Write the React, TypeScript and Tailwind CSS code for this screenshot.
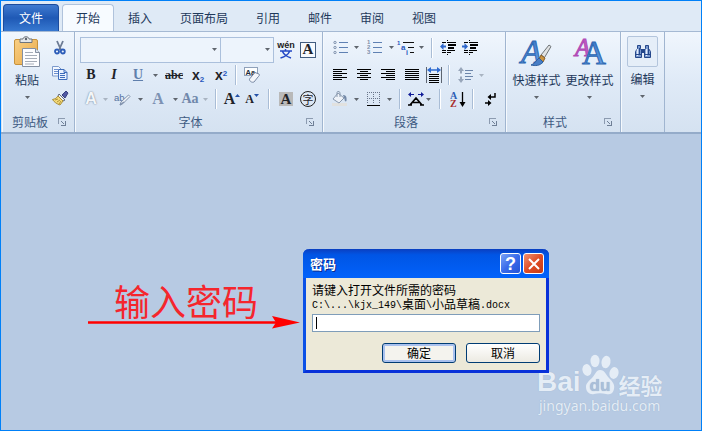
import type { ReactNode } from "react";

const SERIF = "font-['Liberation_Serif',serif] font-bold";

function Caret({ dim = false }: { dim?: boolean }) {
  return (
    <svg width="5" height="3" viewBox="0 0 5 3" className="shrink-0" aria-hidden="true">
      <path d="M0 0h5L2.500 3z" fill={dim ? "#a9b4c2" : "#5f656d"} />
    </svg>
  );
}

function Tool({ label, w = "w-6", children }: { label: string; w?: string; children: ReactNode }) {
  return (
    <button type="button" aria-label={label} className={`flex h-6 shrink-0 items-center justify-center leading-none text-[#1f2329] ${w}`}>
      {children}
    </button>
  );
}

function Drop({ label, w = "w-1.5", dim }: { label: string; w?: string; dim?: boolean }) {
  return (
    <Tool label={label} w={w}>
      <Caret dim={dim} />
    </Tool>
  );
}

function Sep({ w = "w-4" }: { w?: string }) {
  return (
    <span className={`flex shrink-0 justify-center ${w}`}>
      <span className="h-5 w-0.5 border-l border-r border-l-[#a9bdd6] border-r-white" />
    </span>
  );
}

function Group({ title, width, launcher = true, children }: { title: string; width: string; launcher?: boolean; children: ReactNode }) {
  return (
    <section aria-label={title || "编辑"} className={`flex shrink-0 flex-col border-r border-[#a0b5d0] shadow-[inset_1px_0_0_#f5f9fd] ${width}`}>
      <div className="flex h-20 pt-1">{children}</div>
      <div className="flex h-5 items-center text-[#3e5a82]">
        {title && <span className="flex-1 text-center">{title}</span>}
        {launcher && (
          <button type="button" aria-label={`${title}设置`} className="flex w-4 items-center">
            <svg width="8" height="8" viewBox="0 0 8 8" shapeRendering="crispEdges" aria-hidden="true">
              <path d="M0 6V0h7v1H1v5z" fill="#8c9bb0" />
              <path d="M3 3h1v1H3zM4 4h1v1H4zM5 5h1v1H5zM7 3h1v5H3V7h4z" fill="#6f7f96" />
            </svg>
          </button>
        )}
      </div>
    </section>
  );
}

function Combo({ label, w }: { label: string; w: string }) {
  return (
    <label className={`grid h-[26px] shrink-0 items-center ${w}`}>
      <select aria-label={label} className="col-start-1 row-start-1 h-full w-full appearance-none border border-[#abc0dc] bg-[#edf4fc]">
        <option></option>
      </select>
      <span className="pointer-events-none col-start-1 row-start-1 justify-self-end pr-1">
        <Caret />
      </span>
    </label>
  );
}

function Lines({ rows }: { rows: [number, number][] }) {
  return (
    <svg width="14" height="12" viewBox="0 0 14 12" shapeRendering="crispEdges" aria-hidden="true">
      {rows.map(([x, w], i) => (
        <rect key={i} x={x} y={i * 2} width={w} height="1" fill="#000" />
      ))}
    </svg>
  );
}

const LEFT: [number, number][] = [[0, 14], [0, 9], [0, 14], [0, 9], [0, 14], [0, 9]];
const CENTER: [number, number][] = [[0, 14], [3, 8], [0, 14], [3, 8], [0, 14], [3, 8]];
const RIGHT: [number, number][] = [[0, 14], [5, 9], [0, 14], [5, 9], [0, 14], [5, 9]];
const FULL: [number, number][] = [[0, 14], [0, 14], [0, 14], [0, 14], [0, 14], [0, 14]];

function PasteIcon() {
  return (
    <svg width="28" height="32" viewBox="0 0 28 32" aria-hidden="true">
      <defs>
        <linearGradient id="board" x2="1" y2="1">
          <stop stopColor="#f9cf84" />
          <stop offset="1" stopColor="#e9aa49" />
        </linearGradient>
      </defs>
      <rect x="1.500" y="3.500" width="23" height="25" rx="1.500" fill="url(#board)" stroke="#c7923c" />
      <path d="M7 3h3c0-3 6-3 6 0h3v3.500H7z" fill="#e4e7ea" stroke="#6d747d" />
      <circle cx="13" cy="3" r="1.200" fill="#59616b" />
      <path d="M9.500 12.500h13l4 4v14h-17z" fill="#fdfdff" stroke="#8590a2" />
      <path d="M22.500 12.500v4h4" fill="#dfe5ee" stroke="#8590a2" />
      <path d="M12 16.500h8M12 19.500h12M12 22.500h12M12 25.500h12M12 28h9" stroke="#a6adb8" />
    </svg>
  );
}

function ScissorsIcon() {
  return (
    <svg width="12" height="16" viewBox="0 0 12 16" aria-hidden="true">
      <path d="M3 1l4 9M9 1L5 10" stroke="#6c7b94" strokeWidth="1.800" />
      <circle cx="3" cy="11.500" r="2" fill="none" stroke="#2c5cb8" strokeWidth="1.800" />
      <circle cx="8.800" cy="11.500" r="2" fill="none" stroke="#2c5cb8" strokeWidth="1.800" />
    </svg>
  );
}

function CopyIcon() {
  return (
    <svg width="16" height="14" viewBox="0 0 16 14" aria-hidden="true">
      <path d="M.5.5h6l2.500 2.500v7H.5z" fill="#f4f8ff" stroke="#7d9acb" />
      <path d="M2 3.500h4M2 5.500h4M2 7.500h4" stroke="#6c8fce" />
      <path d="M6.500 3.500h5.500l3 3v7H6.500z" fill="#eaf2ff" stroke="#3f6dbb" />
      <path d="M8 7.500h5M8 9.500h5M8 11.500h5M12 3.500v3h3" fill="none" stroke="#3f6dbb" />
    </svg>
  );
}

function BrushIcon() {
  return (
    <svg width="17" height="16" viewBox="0 0 17 16" aria-hidden="true">
      <path d="M10 5l4-4 2 2-3 5z" fill="#5159a2" stroke="#363e82" />
      <path d="M7 4l6 6-2 1-5-5z" fill="#eceff5" stroke="#5f6674" />
      <path d="M6 6l5 5-3 4c-3-1-6-3-7.500-5.500C3 9 5 8 6 6z" fill="#f5dc7a" stroke="#a88c37" />
      <path d="M3 10l3-1M5 12l3-2M7 14l2-3" stroke="#b3933a" />
    </svg>
  );
}

function Numbering({ numbered = false }: { numbered?: boolean }) {
  return (
    <svg width="15" height="15" viewBox="0 0 15 15" aria-hidden="true">
      {[2, 7, 12].map((y, i) => (
        <g key={y}>
          {numbered ? (
            <text x="0" y={y + 2} fontSize="6" fontWeight="bold" fontFamily="Liberation Sans" fill="#7e90aa">{i + 1}</text>
          ) : (
            <circle cx="2" cy={y + 0.5} r="1.200" fill="#dde7f3" stroke="#8496b0" />
          )}
          <rect x="6" y={y} width="9" height="1" fill="#5f81b3" />
        </g>
      ))}
    </svg>
  );
}

function MultiLevelIcon() {
  return (
    <svg width="18" height="16" viewBox="0 0 18 16" aria-hidden="true">
      <g fill="#2857bd" fontFamily="Liberation Sans" fontWeight="bold">
        <text x="0" y="5" fontSize="6">1</text>
        <text x="4" y="10" fontSize="8">a</text>
        <text x="9" y="15" fontSize="7">i</text>
      </g>
      <path d="M6 2.500h11M11 7.500h6M13 12.500h4" stroke="#111" />
    </svg>
  );
}

function IndentIcon({ out = false }: { out?: boolean }) {
  return (
    <svg width="16" height="15" viewBox="0 0 16 15" aria-hidden="true">
      <g fill="#000" shapeRendering="crispEdges">
        <rect x="2" y="2" width="4" height="1" />
        <rect x="7" y="2" width="9" height="1" />
        <rect x="8" y="4" width="8" height="2" />
        <rect x="8" y="7" width="6" height="2" />
        <rect x="2" y="10" width="4" height="1" />
        <rect x="7" y="10" width="8" height="1" />
        <rect x="2" y="12" width="4" height="1" />
        <rect x="7" y="12" width="4" height="1" />
        <rect x="7" y="0" width="1" height="1" />
        <rect x="7" y="14" width="1" height="1" />
      </g>
      <path d={out ? "M0 6.500L3.500 3v2.500H6v2H3.500V10z" : "M6 6.500L2.500 3v2.500H0v2h2.500V10z"} fill="#2d66cb" />
    </svg>
  );
}

function DistributeIcon() {
  return (
    <svg width="16" height="16" viewBox="0 0 16 16" aria-hidden="true">
      <path d="M.5 0v16M15.500 0v16" stroke="#5c6470" />
      <path d="M3 7.500h10M3 9.500h10M3 11.500h10M3 13.500h10M3 15.500h10" stroke="#000" />
      <path d="M1 3l4-3v2.200h6V0l4 3-4 3V3.800H5V6z" fill="#2f6bd0" />
    </svg>
  );
}

function SpacingIcon() {
  return (
    <svg width="16" height="16" viewBox="0 0 16 16" aria-hidden="true">
      <path d="M3 0l3 4H4v8h2l-3 4-3-4h2V4H0z" fill="#98a6ba" />
      <path d="M3 6.500v3" stroke="#e6eef8" strokeWidth="3" />
      <path d="M7 3.500h8M7 6.500h6M7 9.500h8M7 12.500h6" stroke="#6d86aa" />
    </svg>
  );
}

function BucketIcon() {
  return (
    <svg width="16" height="16" viewBox="0 0 16 16" aria-hidden="true">
      <rect x="0" y="12" width="15" height="3" fill="#e1e1df" />
      <path d="M6 2l6 5-5 5-6-4z" fill="#eef2f8" stroke="#8999ae" />
      <path d="M5 6V1.500C5 0 8 0 8 2v4" fill="none" stroke="#8999ae" />
      <path d="M11 4c3 0 4 2 3.500 6-1 1-2 0-2-2z" fill="#7389a8" />
    </svg>
  );
}

function BordersIcon() {
  return (
    <svg width="13" height="14" viewBox="0 0 13 14" shapeRendering="crispEdges" aria-hidden="true">
      <path d="M0 .5h13M0 6.500h13M.5 0v12M6.500 0v12M12.500 0v12" stroke="#69758a" strokeDasharray="1 1" />
      <path d="M0 13h13" stroke="#000" strokeWidth="1" />
    </svg>
  );
}

function AsianLayoutIcon() {
  return (
    <svg width="16" height="14" viewBox="0 0 16 14" aria-hidden="true">
      <path d="M0 13h4M12 13h4M2 13l6-7 6 7M4.500 10.500h7" fill="none" stroke="#000" strokeWidth="1.700" />
      <path d="M0 2.500L3 0v2h3v1H3v2zM16 2.500L13 0v2h-3v1h3v2z" fill="#111c98" />
    </svg>
  );
}

function SortIcon() {
  return (
    <svg width="16" height="17" viewBox="0 0 16 17" aria-hidden="true">
      <g fontFamily="Liberation Serif" fontWeight="bold" fontSize="10">
        <text x="0" y="8" fill="#2c5eb5">A</text>
        <text x="0" y="16" fill="#a82d2d">Z</text>
      </g>
      <path d="M12.500 1v13" stroke="#000" strokeWidth="1.300" />
      <path d="M9.500 11h6l-3 5z" />
    </svg>
  );
}

function MarksIcon() {
  return (
    <svg width="11" height="13" viewBox="0 0 11 13" aria-hidden="true">
      <path d="M10 0v4H4M0 10h5" fill="none" stroke="#000" strokeWidth="1.500" />
      <path d="M6 1v6L2.500 4zM3 7v6l3.500-3z" />
    </svg>
  );
}

function EraserIcon() {
  return (
    <svg width="17" height="16" viewBox="0 0 17 16" aria-hidden="true">
      <rect x=".5" y=".5" width="13" height="8" fill="#fdfefe" stroke="#8fa1ba" />
      <text x="1.500" y="7.500" fontSize="7.500" fontWeight="bold" fontFamily="Liberation Sans" fill="#1c2b3a">Aa</text>
      <path d="M11 5.500l4 1.500c1 1 0 2-1 3l-4 5c-2 1-5-1-4.500-3z" fill="#f4f6fb" stroke="#7788a3" />
    </svg>
  );
}

function HighlightIcon() {
  return (
    <svg width="17" height="13" viewBox="0 0 17 13" aria-hidden="true">
      <text x="0" y="8" fontSize="9.500" fontFamily="Liberation Sans" fill="#54729f">ab</text>
      <path d="M14.500 2l1.500 1.500-7 7-3 1.500 1-3z" fill="#f1f4f8" stroke="#8193ae" />
      <path d="M6 12l4-3" stroke="#8193ae" strokeWidth="1.500" />
    </svg>
  );
}

function PinyinIcon() {
  return (
    <svg width="18" height="18" viewBox="0 0 18 18" className="overflow-visible" aria-hidden="true">
      <text x="9" y="7" textAnchor="middle" fontSize="9" fontWeight="bold" fontFamily="Liberation Sans" fill="#222">wén</text>
      <path d="M3 10h12M8.500 8v2M5.500 10.500c1.500 3.500 4 5 8.500 6.500M12.500 10.500c-1.500 3.500-4 5-9 6.500" fill="none" stroke="#2448c5" strokeWidth="1.500" />
    </svg>
  );
}

function QuickStyleIcon() {
  return (
    <svg width="32" height="32" viewBox="0 0 32 32" className="overflow-visible" aria-hidden="true">
      <defs>
        <linearGradient id="blueA" x2="0" y2="1">
          <stop stopColor="#3270c0" />
          <stop offset="1" stopColor="#70a9eb" />
        </linearGradient>
      </defs>
      <text x="0" y="27" fontSize="34" fontFamily="Liberation Serif" fontStyle="italic" fill="url(#blueA)" stroke="#2d67b2">A</text>
      <path d="M28 9l2 1.500-6.500 11-3.500-2.500z" fill="#e1e3e4" stroke="#6e7376" />
      <path d="M20 19l4 3-2 4-4-3z" fill="#c99442" stroke="#855b27" />
      <path d="M18 22l4 4c-3 4-8 4-12 3 4-1 5-5 8-7z" fill="#497fc6" stroke="#2d5e9d" />
    </svg>
  );
}

function ChangeStyleIcon() {
  return (
    <svg width="32" height="32" viewBox="0 0 32 32" className="overflow-visible" aria-hidden="true">
      <text x="1" y="20" fontSize="25" fontFamily="Liberation Serif" fontStyle="italic" fill="#c05bc2" stroke="#b04ab6">A</text>
      <text x="8" y="28" fontSize="33" fontFamily="Liberation Serif" fill="url(#blueA)" stroke="#2d67b2">A</text>
    </svg>
  );
}

function BinocularsIcon() {
  return (
    <svg width="16" height="15" viewBox="0 0 16 15" aria-hidden="true">
      <path d="M2.500 4.500V1.500h3v3l1 2v7h-6v-6zM13.500 4.500V1.500h-3v3l-1 2v7h6v-6z" fill="#7898ce" stroke="#24478b" />
      <path d="M6 5h4v4H6z" fill="#24478b" />
      <path d="M2.500 5v7M11.500 5v7" stroke="#e3ecfb" strokeWidth="1.500" />
      <path d="M4.500 4v7M13.500 4v7M1 10.500h5M10 10.500h5" stroke="#24478b" />
    </svg>
  );
}

function PawIcon() {
  return (
    <svg width="38" height="42" viewBox="0 0 38 42" className="shrink-0" fill="#e5edf6" aria-hidden="true">
      <ellipse cx="6" cy="16" rx="4.500" ry="6" transform="rotate(-12 6 16)" />
      <ellipse cx="14" cy="7" rx="4.500" ry="6.200" />
      <ellipse cx="25" cy="8" rx="4.500" ry="6.200" transform="rotate(12 25 8)" />
      <ellipse cx="33" cy="19" rx="4.500" ry="6" transform="rotate(12 33 19)" />
      <path d="M19 16c5 0 6 5 9 8 4 4 6 7 5 11-1 5-5 6-8 5-4-1-8-1-12 0-4 1-8-2-8-7 0-4 3-6 6-9s4-8 8-8z" />
      <text x="19" y="37" textAnchor="middle" fontSize="17" fontWeight="bold" fontFamily="Liberation Sans" fill="#aabfd9">du</text>
    </svg>
  );
}

const TABS = ["开始", "插入", "页面布局", "引用", "邮件", "审阅", "视图"];

function BigButton({ label, icon }: { label: string; icon: ReactNode }) {
  return (
    <button type="button" className="flex w-[53px] shrink-0 flex-col items-center whitespace-nowrap text-[#1e395b]">
      {icon}
      <span className="pt-1 pb-2 leading-4">{label}</span>
      <Caret />
    </button>
  );
}

function Ribbon() {
  return (
    <header className="bg-[#dfeaf6] text-[#1e395b]">
      <nav className="flex h-[30px] items-end gap-[3px] pl-0.5 pt-[3px]">
        <button type="button" className="h-[27px] w-14 rounded-t-sm border border-b-0 border-[#1c4c9e] bg-linear-to-b from-[#3f7ad0] via-[#1f59b5] to-[#3778d0] text-white">
          文件
        </button>
        <div role="tablist" className="flex h-[27px]">
          {TABS.map((tab, i) => (
            <button
              key={tab}
              type="button"
              role="tab"
              aria-selected={i === 0}
              className={i === 0 ? "rounded-t-sm border border-b-0 border-[#b0c3dc] bg-[#f7fbff] px-[13px]" : "px-3.5"}
            >
              {tab}
            </button>
          ))}
        </div>
      </nav>
      <div className="flex h-[103px] overflow-hidden border-t border-b-2 border-t-[#a5b9d3] border-b-[#94abc9] bg-linear-to-b from-[#f0f6fd] via-[#dfeaf7] to-[#d5e2f1] pl-px">
        <Group title="剪贴板" width="w-[73px]">
          <button type="button" className="flex w-[46px] flex-col items-center pl-1">
            <PasteIcon />
            <span className="pt-1 pb-2 leading-4">粘贴</span>
            <Caret />
          </button>
          <div className="flex flex-col gap-px">
            <Tool label="剪切"><ScissorsIcon /></Tool>
            <Tool label="复制"><CopyIcon /></Tool>
            <Tool label="格式刷"><BrushIcon /></Tool>
          </div>
        </Group>

        <Group title="字体" width="w-[248px]">
          <div className="flex flex-col pl-[5px]">
            <div className="flex h-[27px] items-center">
              <Combo label="字体名称" w="w-[141px]" />
              <span className="-ml-px"><Combo label="字号" w="w-[54px]" /></span>
              <Tool label="拼音指南"><PinyinIcon /></Tool>
              <Tool label="字符边框" w="w-5">
                <span className={`flex size-4 items-center justify-center border border-[#425d80] bg-white/60 text-[15px] leading-none ${SERIF}`}>A</span>
              </Tool>
            </div>
            <div className="flex h-6 items-center">
              <Tool label="加粗" w="w-[22px]"><b className={`text-sm ${SERIF}`}>B</b></Tool>
              <Tool label="倾斜"><i className={`text-sm ${SERIF}`}>I</i></Tool>
              <Tool label="下划线"><u className={`text-sm text-[#5f7fac] ${SERIF}`}>U</u></Tool>
              <Drop label="下划线样式" w="w-2.5" />
              <Tool label="删除线" w="w-7"><s className={`text-xs ${SERIF}`}>abc</s></Tool>
              <Tool label="下标" w="w-5"><span className="font-['Liberation_Sans'] text-sm font-bold">x<sub className="text-[8px] text-[#2857bd]">2</sub></span></Tool>
              <Tool label="上标" w="w-[26px]"><span className="font-['Liberation_Sans'] text-sm font-bold">x<sup className="text-[8px] text-[#2857bd]">2</sup></span></Tool>
              <Sep w="w-1" />
              <Tool label="清除格式" w="w-7"><EraserIcon /></Tool>
            </div>
            <div className="flex h-6 items-center">
              <Tool label="文本效果" w="w-[22px]">
                <span className="font-['Liberation_Sans'] text-base font-bold text-[#f3f6f9] [text-shadow:0_0_2px_#8896a8,0_0_1px_#8896a8]">A</span>
              </Tool>
              <Drop label="文本效果选项" dim />
              <Tool label="突出显示" w="w-7"><HighlightIcon /></Tool>
              <Drop label="突出显示颜色" w="w-2" />
              <Tool label="字体颜色" w="w-7"><span className={`text-base text-[#7d92b3] ${SERIF}`}>A</span></Tool>
              <Drop label="更多字体颜色" />
              <Tool label="更改大小写"><span className={`text-sm text-[#7188ab] ${SERIF}`}>Aa</span></Tool>
              <Drop label="大小写选项" dim />
              <Sep />
              <Tool label="增大字体" w="w-4">
                <span className={`text-base ${SERIF}`}>A</span>
                <svg width="5" height="3" viewBox="0 0 5 3" className="mb-2 shrink-0"><path d="M0 3h5L2.500 0z" fill="#2451a8" /></svg>
              </Tool>
              <Tool label="缩小字体">
                <span className={`text-xs ${SERIF}`}>A</span>
                <svg width="5" height="3" viewBox="0 0 5 3" className="mb-2 shrink-0"><path d="M0 0h5L2.500 3z" fill="#2451a8" /></svg>
              </Tool>
              <Sep w="w-2.5" />
              <Tool label="字符底纹">
                <span className={`flex size-3.5 items-center justify-center bg-[#b9b9b9] text-[15px] leading-none ${SERIF}`}>A</span>
              </Tool>
              <Tool label="带圈字符" w="w-5">
                <span className="flex size-4 items-center justify-center rounded-full border border-[#222] text-[11px] leading-none">字</span>
              </Tool>
            </div>
          </div>
        </Group>

        <Group title="段落" width="w-[183px]">
          <div className="flex flex-col pl-[5px]">
            <div className="flex h-[27px] items-center pb-1">
              <Tool label="项目符号"><Numbering /></Tool>
              <Drop label="项目符号库" w="w-2" />
              <Tool label="编号" w="w-7"><Numbering numbered /></Tool>
              <Drop label="编号库" />
              <Tool label="多级列表"><MultiLevelIcon /></Tool>
              <Drop label="多级列表库" />
              <Sep />
              <Tool label="减少缩进" w="w-4"><IndentIcon out /></Tool>
              <Tool label="增加缩进" w="w-7"><IndentIcon /></Tool>
            </div>
            <div className="flex h-6 items-center">
              <Tool label="左对齐"><Lines rows={LEFT} /></Tool>
              <Tool label="居中"><Lines rows={CENTER} /></Tool>
              <Tool label="右对齐"><Lines rows={RIGHT} /></Tool>
              <Tool label="两端对齐"><Lines rows={FULL} /></Tool>
              <Tool label="分散对齐" w="w-5"><DistributeIcon /></Tool>
              <Sep w="w-2.5" />
              <Tool label="行距"><SpacingIcon /></Tool>
              <Drop label="行距选项" dim />
            </div>
            <div className="flex h-6 items-center">
              <Tool label="底纹"><BucketIcon /></Tool>
              <Drop label="底纹颜色" w="w-2" />
              <Tool label="边框" w="w-[26px]"><BordersIcon /></Tool>
              <Drop label="边框选项" />
              <Sep />
              <Tool label="中文版式" w="w-4"><AsianLayoutIcon /></Tool>
              <Drop label="中文版式选项" w="w-2" />
              <Sep />
              <Tool label="排序" w="w-5"><SortIcon /></Tool>
              <Sep w="w-2.5" />
              <Tool label="显示编辑标记"><MarksIcon /></Tool>
            </div>
          </div>
        </Group>

        <Group title="样式" width="w-[115px]">
          <div className="flex pl-1">
            <BigButton label="快速样式" icon={<QuickStyleIcon />} />
            <BigButton label="更改样式" icon={<ChangeStyleIcon />} />
          </div>
        </Group>

        <Group title="" width="w-11" launcher={false}>
          <button type="button" className="flex w-full flex-col items-center">
            <span className="flex size-[31px] items-center justify-center rounded-xs border border-[#b3c5dc] bg-[#e5eef8]">
              <BinocularsIcon />
            </span>
            <span className="pt-1 pb-2 leading-4">编辑</span>
            <Caret />
          </button>
        </Group>
      </div>
    </header>
  );
}

function PasswordDialog() {
  return (
    <form
      role="dialog"
      aria-labelledby="dialog-title"
      className="absolute left-[302px] top-[115px] w-[246px] rounded-t-md border-[3px] border-t-0 border-[#0831d9] border-l-[#0a50e6] bg-[#ece9d8] text-black"
    >
      <div className="-mx-[3px] flex h-[29px] items-center gap-0.5 rounded-t-md bg-linear-to-b from-[#0a3fc0] via-[#0055e5] via-20% to-[#0262fb] pl-[7px] pr-[5px]">
        <h1 id="dialog-title" className="flex-1 text-[13px] font-bold text-white [text-shadow:1px_1px_0_#0a2a8c]">密码</h1>
        <button type="button" aria-label="帮助" className="flex size-[21px] items-center justify-center rounded-[3px] border border-white bg-linear-to-br from-[#7ba2f5] via-[#3a6bea] to-[#2453d6]">
          <span className="font-['Liberation_Sans'] text-lg leading-none font-bold text-white">?</span>
        </button>
        <button type="button" aria-label="关闭" className="flex size-[21px] items-center justify-center rounded-[3px] border border-white bg-linear-to-br from-[#f0906f] via-[#e04d26] to-[#c63a12]">
          <svg width="12" height="12" viewBox="0 0 12 12" aria-hidden="true">
            <path d="M1 1l10 10M11 1L1 11" stroke="#fff" strokeWidth="2" />
          </svg>
        </button>
      </div>
      <div className="px-1.5 pt-1 pb-[7px]">
        <label htmlFor="password" className="flex flex-col leading-4">
          <span>请键入打开文件所需的密码</span>
          <span className="flex h-4 items-center whitespace-nowrap font-['Liberation_Mono','Noto_Sans_CJK_SC',monospace] text-[10px]">
            <span>C:\...\kjx_149\</span>
            <span className="text-xs">桌面</span>
            <span>\</span>
            <span className="text-xs">小品草稿</span>
            <span>.docx</span>
          </span>
        </label>
        <div className="relative">
          <input id="password" type="password" className="block h-[18px] w-[228px] border border-[#7f9db9] bg-white px-0.5 outline-none" />
          <span className="absolute left-1 top-[3px] h-3 w-px bg-black" />
        </div>
        <div className="mt-[11px] flex justify-end gap-2.5">
          <button type="submit" className="h-5 w-[74px] rounded-[3px] border border-[#003c74] bg-[#f4f3ee] leading-none shadow-[inset_0_0_0_2px_#a9c1ee]">确定</button>
          <button type="button" className="h-5 w-[74px] rounded-[3px] border border-[#003c74] bg-linear-to-b from-white to-[#eceae2] leading-none">取消</button>
        </div>
      </div>
    </form>
  );
}

export default function App() {
  return (
    <div className="flex min-h-screen flex-col border border-[#0080f8] bg-[#b7cae3] font-['Noto_Sans_CJK_SC',sans-serif] text-xs">
      <Ribbon />
      <main className="relative flex-1">
        <div className="absolute left-[87px] top-[146px] w-[214px] text-[#f5262d]">
          <p className="pl-[26px] font-['Noto_Sans_CJK_SC',sans-serif] text-4xl leading-10">输入密码</p>
          <svg width="213" height="13" viewBox="0 0 213 13" className="-mt-1 block" aria-hidden="true">
            <path d="M0 6.500h190" stroke="#f00" strokeWidth="2.500" />
            <path d="M184 0l28 6.500-28 6 4-6z" fill="#f00" />
          </svg>
        </div>
        <div className="absolute right-9 bottom-3.5 w-32 text-[#e5edf6] [text-shadow:0_0_1px_#93abc9]">
          <div className="flex h-10 items-end">
            <span className="font-['Liberation_Sans'] text-[28px] leading-7 font-bold">Bai</span>
            <PawIcon />
            <span className="text-[22px] leading-6 font-bold">经验</span>
          </div>
          <p className="pl-0.5 font-['Noto_Sans'] text-[14px] leading-5">jingyan.baidu.com</p>
        </div>
        <PasswordDialog />
      </main>
    </div>
  );
}
